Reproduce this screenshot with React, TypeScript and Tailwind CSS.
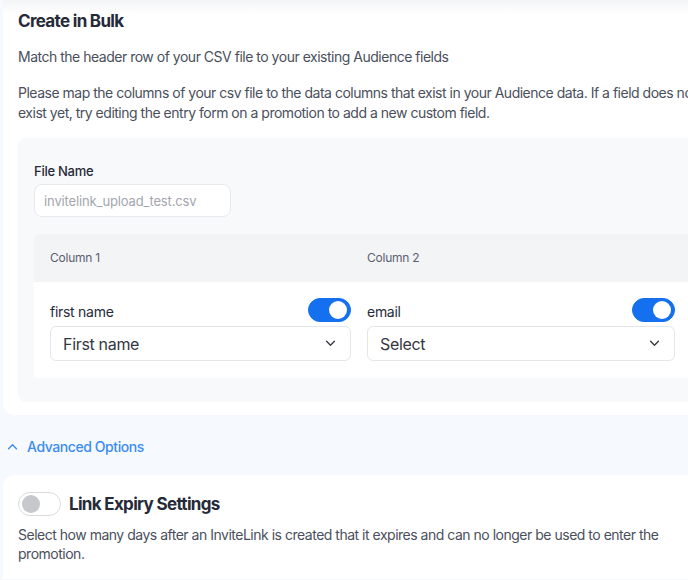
import React, { useState } from 'react';

const font = { fontFamily: 'Inter, "Noto Sans", sans-serif' };

interface ToggleProps {
    on: boolean;
    onChange: () => void;
}

const Toggle: React.FC<ToggleProps> = ({ on, onChange }) => (
    <button
        type="button"
        onClick={onChange}
        className={`relative h-6 w-[43px] shrink-0 rounded-full border ${
            on ? 'border-[#1570ef] bg-[#1570ef]' : 'border-[#d9dbe0] bg-white'
        }`}
    >
        <span
            className={`absolute top-[2px] h-[18px] w-[18px] rounded-full ${
                on ? 'right-[3px] bg-white' : 'left-[3px] bg-[#c7c8cc]'
            }`}
        />
    </button>
);

const Chevron: React.FC<{ up?: boolean; className?: string }> = ({ up, className }) => (
    <svg viewBox="0 0 12 8" className={className} fill="none" stroke="currentColor" strokeWidth="1.6" strokeLinecap="round" strokeLinejoin="round">
        {up ? <path d="M1.5 6.5 6 2l4.5 4.5" /> : <path d="M1.5 1.5 6 6l4.5-4.5" />}
    </svg>
);

interface ColumnMap {
    header: string;
    value: string;
    enabled: boolean;
}

export default function App() {
    const [columns, setColumns] = useState<ColumnMap[]>([
        { header: 'first name', value: 'First name', enabled: true },
        { header: 'email', value: 'Select', enabled: true },
    ]);
    const [expiry, setExpiry] = useState(false);

    const toggleColumn = (index: number) => {
        setColumns(columns.map((c, i) => (i === index ? { ...c, enabled: !c.enabled } : c)));
    };

    return (
        <div className="h-[580px] w-[688px] overflow-hidden bg-[#f6f9fd] pl-[3px]" style={font}>
            <div className="w-[720px]">
                {/* Create in Bulk */}
                <div className="rounded-b-xl bg-[linear-gradient(to_bottom,#f3f4f6_0px,#ffffff_14px)] px-[15px] pb-[13px] pt-[9px]">
                    <h2 className="text-[17px] font-bold leading-6 tracking-[-0.04em] text-[#262a38]">Create in Bulk</h2>
                    <p className="mt-[14px] text-[14px] leading-5 tracking-[-0.035em] text-[#4a4f5c]">
                        Match the header row of your CSV file to your existing Audience fields
                    </p>
                    <p className="mt-4 text-[14px] leading-5 tracking-[-0.035em] text-[#4a4f5c]">
                        <span className="block whitespace-nowrap">
                            Please map the columns of your csv file to the data columns that exist in your Audience data. If a field does not
                        </span>
                        <span className="block whitespace-nowrap">
                            exist yet, try editing the entry form on a promotion to add a new custom field.
                        </span>
                    </p>

                    <div className="mt-[15px] rounded-lg bg-[#f8f9fb] px-4 pb-6 pt-6">
                        <label className="block text-[13px] font-medium leading-[18px] tracking-[-0.02em] text-[#262a38]">File Name</label>
                        <input
                            readOnly
                            placeholder="invitelink_upload_test.csv"
                            className="mt-[4px] h-[33px] w-[197px] rounded-lg border border-[#e6e8ec] bg-white px-[9px] text-[13px] tracking-[-0.01em] text-[#9a9da6] placeholder:text-[#a3a6ae] focus:outline-none"
                        />

                        <div className="mt-[17px] overflow-hidden rounded-sm">
                            <div className="grid h-12 grid-cols-[301px_308px] items-center gap-4 bg-[#f3f4f6] px-4 text-[12px] tracking-[-0.02em] text-[#5b6070]">
                                <span>Column 1</span>
                                <span>Column 2</span>
                            </div>
                            <div className="grid grid-cols-[301px_308px] gap-4 bg-white px-4 pb-[17px] pt-4">
                                {columns.map((col, i) => (
                                    <div key={col.header}>
                                        <div className="flex h-6 items-center justify-between">
                                            <span className="pt-[2px] text-[14px] tracking-[-0.02em] text-[#262a38]">{col.header}</span>
                                            <Toggle on={col.enabled} onChange={() => toggleColumn(i)} />
                                        </div>
                                        <div className="mt-1 flex h-[35px] items-center justify-between rounded-md border border-[#e4e6ea] bg-white pl-3 pr-[14px]">
                                            <span className="text-[16px] tracking-[-0.02em] text-[#34373f]">{col.value}</span>
                                            <Chevron className="h-[7px] w-[11px] text-[#3a3d45]" />
                                        </div>
                                    </div>
                                ))}
                            </div>
                        </div>
                    </div>
                </div>

                {/* Advanced Options */}
                <button type="button" className="flex h-[60px] items-center gap-[9px] pl-1 pt-[3px] text-[14px] font-medium tracking-[-0.03em] text-[#3b8cf2]">
                    <Chevron up className="h-[7px] w-[11px]" />
                    <span>Advanced Options</span>
                </button>

                {/* Link Expiry */}
                <div className="rounded-t-xl bg-white px-[15px] pb-4 pt-[17px]">
                    <div className="flex items-center gap-2">
                        <Toggle on={expiry} onChange={() => setExpiry(!expiry)} />
                        <h3 className="text-[17px] font-bold leading-6 tracking-[-0.04em] text-[#262a38]">Link Expiry Settings</h3>
                    </div>
                    <p className="mt-[9px] text-[14px] leading-[19px] tracking-[-0.035em] text-[#4a4f5c]">
                        <span className="block whitespace-nowrap">
                            Select how many days after an InviteLink is created that it expires and can no longer be used to enter the
                        </span>
                        <span className="block">promotion.</span>
                    </p>
                </div>
            </div>
        </div>
    );
}
